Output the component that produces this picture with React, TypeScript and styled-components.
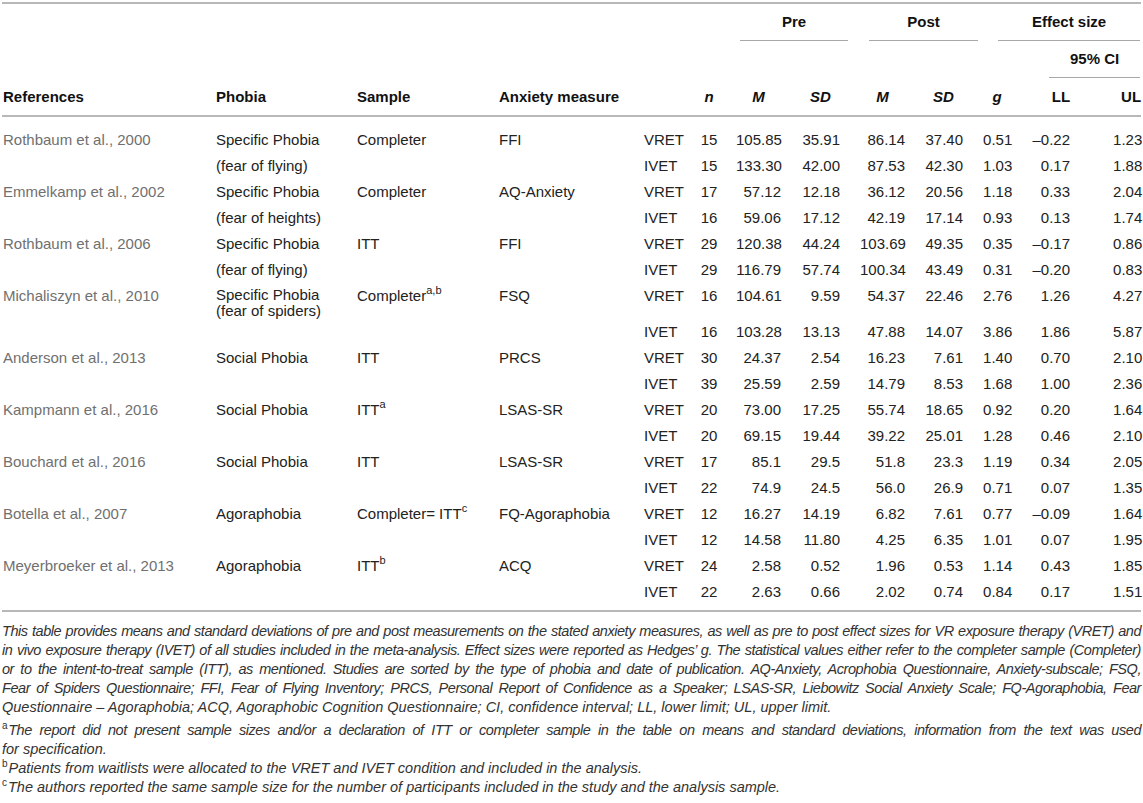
import React from "react";
import styled, { createGlobalStyle } from "styled-components";

const GlobalStyle = createGlobalStyle`
  html, body {
    margin: 0;
    padding: 0;
    background: #ffffff;
  }
  body {
    font-family: "Liberation Sans", Arial, sans-serif;
    color: #222222;
  }
`;

const Page = styled.div`
  width: 1143px;
  box-sizing: border-box;
  padding: 2px 2px 0 2px;
`;

const Table = styled.table`
  width: 1139px;
  table-layout: fixed;
  border-collapse: separate;
  border-spacing: 0;
  border-top: 2px solid #b8b8b8;
  border-bottom: 2px solid #b8b8b8;
  font-size: 15px;
`;

const GroupRow = styled.tr`
  height: 37px;
`;

const GroupHead = styled.th<{ $inL: number; $inR: number }>`
  padding: 0 ${(p) => p.$inR}px 0 ${(p) => p.$inL}px;
  vertical-align: bottom;
  font-weight: bold;
  color: #111111;
`;

const GroupLabel = styled.div`
  height: 36px;
  line-height: 36px;
  text-align: center;
  border-bottom: 1px solid #a8a8a8;
`;

// shared column paddings for the title row and the data rows
const ColumnRow = styled.tr`
  & > :nth-child(1) { padding-left: 1px; }
  & > :nth-child(6) { text-align: center; }
  & > :nth-child(7) { padding-left: 8px; padding-right: 5px; }
  & > :nth-child(8) { padding-left: 15px; padding-right: 10px; }
  & > :nth-child(9) { padding-left: 10px; padding-right: 5px; }
  & > :nth-child(10) { padding-left: 14px; padding-right: 17px; }
  & > :nth-child(11) { padding-left: 3px; padding-right: 9px; }
  & > :nth-child(12) { padding-left: 10px; padding-right: 5px; }
  & > :nth-child(13) { padding-left: 38px; padding-right: 0; }
`;

const TitleRow = styled(ColumnRow)`
  height: 39px;
`;

const ColHead = styled.th<{ $align?: string; $italic?: boolean }>`
  text-align: ${(p) => p.$align || "center"};
  font-style: ${(p) => (p.$italic ? "italic" : "normal")};
  font-weight: bold;
  color: #111111;
  white-space: nowrap;
  border-bottom: 2px solid #b8b8b8;
  vertical-align: middle;
`;

const DataRow = styled(ColumnRow)<{ $first?: boolean; $last?: boolean; $tall?: boolean }>`
  & > td {
    padding-top: ${(p) => (p.$first ? 14 : 4)}px;
    padding-bottom: ${(p) => (p.$last ? 10 : p.$tall ? 0 : 5)}px;
  }
`;

const Cell = styled.td<{ $num?: boolean }>`
  line-height: 17px;
  vertical-align: top;
  white-space: nowrap;
  text-align: ${(p) => (p.$num ? "right" : "left")};
`;

const RefCell = styled(Cell)`
  color: #707070;
`;

const PhobiaCell = styled(Cell)<{ $stacked?: boolean }>`
  line-height: ${(p) => (p.$stacked ? 16 : 17)}px;
`;

const Sup = styled.sup`
  font-size: 11px;
  line-height: 0;
  vertical-align: 7px;
`;

const Caption = styled.div`
  margin-top: 10px;
  font-size: 14.5px;
  line-height: 19px;
  font-style: italic;
  color: #333333;
`;

const Note = styled.div`
  margin-top: 4px;
`;

const CaptionLine = styled.div<{ $last?: boolean }>`
  text-align: justify;
  text-align-last: ${(p) => (p.$last ? "left" : "justify")};
  letter-spacing: ${(p) => (p.$last ? "0" : "-0.45px")};
  white-space: nowrap;
`;

const Mark = styled.span`
  font-size: 10px;
  font-style: normal;
  vertical-align: 6px;
  line-height: 0;
  margin-right: 1px;
`;

interface IStudy {
  ref: string;
  phobia: string;
  sub?: string;
  stacked?: boolean;
  sample: string;
  sup?: string;
  measure: string;
  rows: string[][];
}

const studies: IStudy[] = [
  { ref: "Rothbaum et al., 2000", phobia: "Specific Phobia", sub: "(fear of flying)", sample: "Completer", measure: "FFI",
    rows: [["VRET", "15", "105.85", "35.91", "86.14", "37.40", "0.51", "–0.22", "1.23"],
           ["IVET", "15", "133.30", "42.00", "87.53", "42.30", "1.03", "0.17", "1.88"]] },
  { ref: "Emmelkamp et al., 2002", phobia: "Specific Phobia", sub: "(fear of heights)", sample: "Completer", measure: "AQ-Anxiety",
    rows: [["VRET", "17", "57.12", "12.18", "36.12", "20.56", "1.18", "0.33", "2.04"],
           ["IVET", "16", "59.06", "17.12", "42.19", "17.14", "0.93", "0.13", "1.74"]] },
  { ref: "Rothbaum et al., 2006", phobia: "Specific Phobia", sub: "(fear of flying)", sample: "ITT", measure: "FFI",
    rows: [["VRET", "29", "120.38", "44.24", "103.69", "49.35", "0.35", "–0.17", "0.86"],
           ["IVET", "29", "116.79", "57.74", "100.34", "43.49", "0.31", "–0.20", "0.83"]] },
  { ref: "Michaliszyn et al., 2010", phobia: "Specific Phobia", sub: "(fear of spiders)", stacked: true, sample: "Completer", sup: "a,b", measure: "FSQ",
    rows: [["VRET", "16", "104.61", "9.59", "54.37", "22.46", "2.76", "1.26", "4.27"],
           ["IVET", "16", "103.28", "13.13", "47.88", "14.07", "3.86", "1.86", "5.87"]] },
  { ref: "Anderson et al., 2013", phobia: "Social Phobia", sample: "ITT", measure: "PRCS",
    rows: [["VRET", "30", "24.37", "2.54", "16.23", "7.61", "1.40", "0.70", "2.10"],
           ["IVET", "39", "25.59", "2.59", "14.79", "8.53", "1.68", "1.00", "2.36"]] },
  { ref: "Kampmann et al., 2016", phobia: "Social Phobia", sample: "ITT", sup: "a", measure: "LSAS-SR",
    rows: [["VRET", "20", "73.00", "17.25", "55.74", "18.65", "0.92", "0.20", "1.64"],
           ["IVET", "20", "69.15", "19.44", "39.22", "25.01", "1.28", "0.46", "2.10"]] },
  { ref: "Bouchard et al., 2016", phobia: "Social Phobia", sample: "ITT", measure: "LSAS-SR",
    rows: [["VRET", "17", "85.1", "29.5", "51.8", "23.3", "1.19", "0.34", "2.05"],
           ["IVET", "22", "74.9", "24.5", "56.0", "26.9", "0.71", "0.07", "1.35"]] },
  { ref: "Botella et al., 2007", phobia: "Agoraphobia", sample: "Completer= ITT", sup: "c", measure: "FQ-Agoraphobia",
    rows: [["VRET", "12", "16.27", "14.19", "6.82", "7.61", "0.77", "–0.09", "1.64"],
           ["IVET", "12", "14.58", "11.80", "4.25", "6.35", "1.01", "0.07", "1.95"]] },
  { ref: "Meyerbroeker et al., 2013", phobia: "Agoraphobia", sample: "ITT", sup: "b", measure: "ACQ",
    rows: [["VRET", "24", "2.58", "0.52", "1.96", "0.53", "1.14", "0.43", "1.85"],
           ["IVET", "22", "2.63", "0.66", "2.02", "0.74", "0.84", "0.17", "1.51"]] },
];

const widths = [213, 141, 142, 145, 47, 38, 58, 64, 60, 70, 40, 55, 66];

function App() {
  return (
    <Page>
      <GlobalStyle />
      <Table>
        <colgroup>
          {widths.map((w, i) => <col key={i} style={{ width: w }} />)}
        </colgroup>
        <thead>
          <GroupRow>
            <th colSpan={6} />
            <GroupHead colSpan={2} $inL={12} $inR={2}><GroupLabel>Pre</GroupLabel></GroupHead>
            <GroupHead colSpan={2} $inL={19} $inR={2}><GroupLabel>Post</GroupLabel></GroupHead>
            <GroupHead colSpan={3} $inL={18} $inR={1}><GroupLabel>Effect size</GroupLabel></GroupHead>
          </GroupRow>
          <GroupRow>
            <th colSpan={11} />
            <GroupHead colSpan={2} $inL={29} $inR={1}><GroupLabel>95% CI</GroupLabel></GroupHead>
          </GroupRow>
          <TitleRow>
            <ColHead $align="left">References</ColHead>
            <ColHead $align="left">Phobia</ColHead>
            <ColHead $align="left">Sample</ColHead>
            <ColHead $align="left">Anxiety measure</ColHead>
            <ColHead />
            <ColHead $italic>n</ColHead>
            <ColHead $italic>M</ColHead>
            <ColHead $italic>SD</ColHead>
            <ColHead $italic>M</ColHead>
            <ColHead $italic>SD</ColHead>
            <ColHead $italic>g</ColHead>
            <ColHead $align="right">LL</ColHead>
            <ColHead $align="right">UL</ColHead>
          </TitleRow>
        </thead>
        <tbody>
          {studies.map((s, si) =>
            s.rows.map((r, ri) => {
              const first = si === 0 && ri === 0;
              const last = si === studies.length - 1 && ri === 1;
              const lead = ri === 0;
              return (
                <DataRow key={`${si}-${ri}`} $first={first} $last={last} $tall={lead && s.stacked}>
                  <RefCell>{lead ? s.ref : ""}</RefCell>
                  <PhobiaCell $stacked={lead && s.stacked}>
                    {lead ? s.phobia : s.stacked ? "" : s.sub || ""}
                    {lead && s.stacked && (<><br />{s.sub}</>)}
                  </PhobiaCell>
                  <Cell>{lead ? (<>{s.sample}{s.sup && <Sup>{s.sup}</Sup>}</>) : ""}</Cell>
                  <Cell>{lead ? s.measure : ""}</Cell>
                  <Cell>{r[0]}</Cell>
                  <Cell>{r[1]}</Cell>
                  {r.slice(2).map((v, vi) => <Cell key={vi} $num>{v}</Cell>)}
                </DataRow>
              );
            })
          )}
        </tbody>
      </Table>
      <Caption>
        <CaptionLine>This table provides means and standard deviations of pre and post measurements on the stated anxiety measures, as well as pre to post effect sizes for VR exposure therapy (VRET) and</CaptionLine>
        <CaptionLine>in vivo exposure therapy (IVET) of all studies included in the meta-analysis. Effect sizes were reported as Hedges’ g. The statistical values either refer to the completer sample (Completer)</CaptionLine>
        <CaptionLine>or to the intent-to-treat sample (ITT), as mentioned. Studies are sorted by the type of phobia and date of publication. AQ-Anxiety, Acrophobia Questionnaire, Anxiety-subscale; FSQ,</CaptionLine>
        <CaptionLine>Fear of Spiders Questionnaire; FFI, Fear of Flying Inventory; PRCS, Personal Report of Confidence as a Speaker; LSAS-SR, Liebowitz Social Anxiety Scale; FQ-Agoraphobia, Fear</CaptionLine>
        <CaptionLine $last>Questionnaire – Agoraphobia; ACQ, Agoraphobic Cognition Questionnaire; CI, confidence interval; LL, lower limit; UL, upper limit.</CaptionLine>
        <Note>
          <CaptionLine><Mark>a</Mark>The report did not present sample sizes and/or a declaration of ITT or completer sample in the table on means and standard deviations, information from the text was used</CaptionLine>
          <CaptionLine $last>for specification.</CaptionLine>
          <CaptionLine $last><Mark>b</Mark>Patients from waitlists were allocated to the VRET and IVET condition and included in the analysis.</CaptionLine>
          <CaptionLine $last><Mark>c</Mark>The authors reported the same sample size for the number of participants included in the study and the analysis sample.</CaptionLine>
        </Note>
      </Caption>
    </Page>
  );
}

export default App;
